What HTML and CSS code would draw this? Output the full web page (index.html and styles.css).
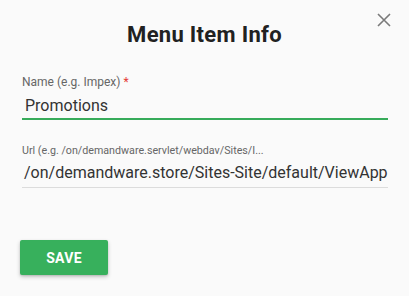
FILE: index.html
```html
<!DOCTYPE html>
<html lang="en">
<head>
<meta charset="utf-8">
<title>Menu Item Info</title>
<link rel="stylesheet" href="styles.css">
</head>
<body>
<div class="dialog">
  <div class="header">
    <h1 class="title">Menu Item Info</h1>
    <button class="close" aria-label="Close">
      <svg width="14" height="14" viewBox="0 0 14 14"><path d="M1 1 L13 13 M13 1 L1 13" stroke="#7a7a7a" stroke-width="1.6" fill="none"/></svg>
    </button>
  </div>
  <form class="form">
    <div class="field">
      <label class="label">Name (e.g. Impex) <span class="req">*</span></label>
      <div class="input focused">Promotions</div>
    </div>
    <div class="field url">
      <label class="label">Url (e.g. /on/demandware.servlet/webdav/Sites/I...</label>
      <div class="input">/on/demandware.store/Sites-Site/default/ViewApp</div>
    </div>
    <button type="button" class="save">SAVE</button>
  </form>
</div>
</body>
</html>
```
FILE: styles.css
```css
html, body {
  margin: 0;
  padding: 0;
  background: #fafafa;
  font-family: Roboto, "Liberation Sans", sans-serif;
}
.dialog {
  width: 409px;
  height: 296px;
  box-sizing: border-box;
  padding-top: 22px;
}
.header {
  position: relative;
}
.title {
  margin: 0;
  font-size: 22px;
  line-height: 26px;
  font-weight: 700;
  color: #212121;
  text-align: center;
  letter-spacing: 0.3px;
}
.close {
  position: absolute;
  top: -9px;
  right: 18px;
  width: 14px;
  height: 14px;
  padding: 0;
  border: 0;
  background: none;
  display: flex;
}
.form {
  display: flex;
  flex-direction: column;
  padding: 27px 21px 0 22px;
}
.field {
  display: flex;
  flex-direction: column;
  margin-bottom: 24px;
}
.label {
  font-size: 12px;
  line-height: 14px;
  height: 14px;
  color: #666;
  margin-bottom: 3px;
  white-space: nowrap;
}
.req {
  color: #e53935;
}
.input {
  font-size: 16px;
  line-height: 19px;
  color: #333;
  padding: 4px 0 3px 3px;
  border-bottom: 1px solid #dcdcdc;
  white-space: nowrap;
}
.input.focused {
  border-bottom: 2px solid #37ab5a;
}
.url .label {
  font-size: 10.7px;
}
.url .input {
  padding: 2px 0 5px 2px;
}
.field.url {
  margin-bottom: 52px;
}
.save {
  align-self: flex-start;
  width: 88px;
  height: 35px;
  margin-left: -2px;
  border: 0;
  border-radius: 2px;
  background: #37b05c;
  color: #fff;
  font-family: Roboto, "Liberation Sans", sans-serif;
  font-size: 14px;
  font-weight: 700;
  letter-spacing: 0.3px;
  box-shadow: 0 2px 4px rgba(0,0,0,0.2), 0 1px 2px rgba(0,0,0,0.12);
}
```
